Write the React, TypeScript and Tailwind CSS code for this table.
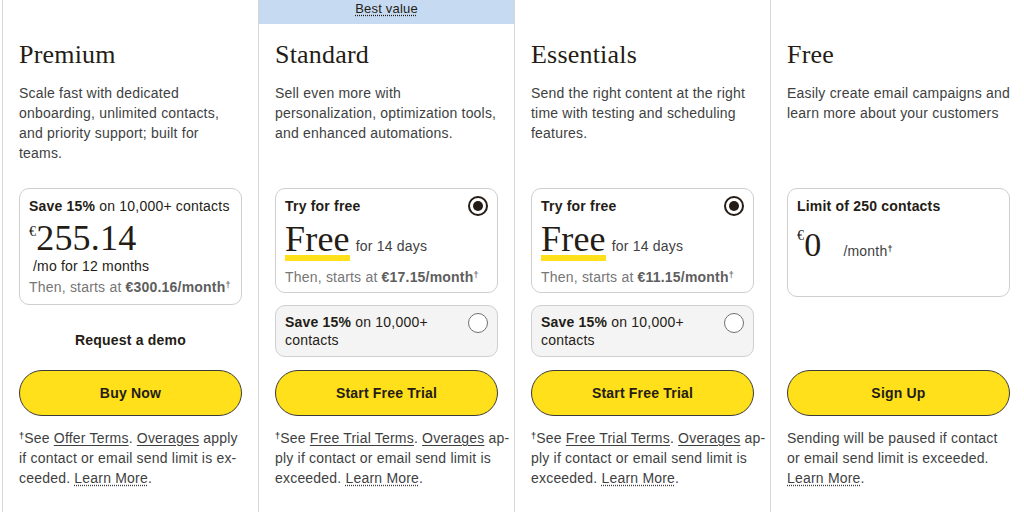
const sans = { fontFamily: '"Liberation Sans", Arial, sans-serif' };

function Radio({ checked }: { checked?: boolean }) {
  if (checked) {
    return (
      <span className="w-5 h-5 shrink-0 rounded-full border-2 border-[#241c15] bg-white flex items-center justify-center">
        <span className="w-[10px] h-[10px] rounded-full bg-[#241c15]" />
      </span>
    );
  }
  return <span className="w-5 h-5 shrink-0 rounded-full border border-[#707070] bg-white" />;
}

function Dagger() {
  return <span className="text-[9px] leading-none align-[4px] font-semibold">†</span>;
}

function Title({ children }: { children: React.ReactNode }) {
  return (
    <h2 className="font-['Liberation_Serif',serif] text-[26px] leading-[32px] text-[#241c15]">
      {children}
    </h2>
  );
}

function Desc({ children }: { children: React.ReactNode }) {
  return (
    <p className="mt-3 min-h-[105px] whitespace-nowrap text-[14px] leading-5 text-[#403f3f]">{children}</p>
  );
}

function YellowButton({ label }: { label: string }) {
  return (
    <button className="w-full h-[46px] rounded-full border border-[#3a3a3a] bg-[#ffe01b] text-[14px] font-semibold text-[#241c15]">
      {label}
    </button>
  );
}

function Then({ price }: { price: string }) {
  return (
    <p className="text-[14px] leading-5 text-[#767676]">
      Then, starts at <span className="font-semibold text-[#5e5e5e]">{price}/month</span>
      <Dagger />
    </p>
  );
}

function TrialBox({ price }: { price: string }) {
  return (
    <div>
      <div className="h-[105px] rounded-[10px] border border-[#cfcfcf] bg-white px-[9px] pt-[7px]">
        <div className="flex justify-between items-start">
          <p className="text-[14px] leading-5 font-semibold text-[#241c15]">Try for free</p>
          <Radio checked />
        </div>
        <div className="mt-[5px] flex items-baseline">
          <div className="flex flex-col">
            <span className="font-['Liberation_Serif',serif] text-[36px] leading-[36px] text-[#241c15]">Free</span>
            <span className="mt-[-2px] h-[6px] bg-[#ffe01b]" />
          </div>
          <span className="ml-[6px] text-[14px] leading-5 text-[#403f3f]">for 14 days</span>
        </div>
        <div className="mt-[6px]">
          <Then price={price} />
        </div>
      </div>
      <div className="mt-3 h-[52px] rounded-[10px] border border-[#cfcfcf] bg-[#f4f4f4] px-[9px] pt-[7px] flex justify-between items-start">
        <p className="text-[14px] leading-[18px] text-[#241c15]">
          <span className="font-semibold">Save 15%</span> on 10,000+
          <br />
          contacts
        </p>
        <Radio />
      </div>
    </div>
  );
}

function Footer({ children }: { children: React.ReactNode }) {
  return <p className="mt-3 whitespace-nowrap text-[14px] leading-5 text-[#403f3f]">{children}</p>;
}

function TrialFooter() {
  return (
    <Footer>
      <Dagger />
      See <span className="underline underline-offset-2">Free Trial Terms</span>.{' '}
      <span className="underline underline-offset-2">Overages</span> ap-
      <br />
      ply if contact or email send limit is
      <br />
      exceeded. <span className="underline decoration-dotted underline-offset-2">Learn More</span>.
    </Footer>
  );
}

export default function App() {
  return (
    <div className="w-[1024px] h-[512px] overflow-hidden bg-white pl-[2px] flex tracking-[0.2px]" style={sans}>
      {/* Premium */}
      <div className="w-[256px] shrink-0 border-l border-[#d6d6d6] px-4">
        <div className="h-6" />
        <div className="pt-[15px]">
          <Title>Premium</Title>
          <Desc>
            Scale fast with dedicated
            <br />
            onboarding, unlimited contacts,
            <br />
            and priority support; built for
            <br />
            teams.
          </Desc>
          <div className="h-[182px]">
            <div className="h-[117px] rounded-[10px] border border-[#cfcfcf] bg-white px-[9px] pt-[7px]">
              <p className="text-[14px] leading-5 text-[#241c15]">
                <span className="font-semibold">Save 15%</span> on 10,000+ contacts
              </p>
              <div className="mt-[4px] flex items-start font-['Liberation_Serif',serif] text-[#241c15]">
                <span className="text-[14px] leading-none mt-[5px]">€</span>
                <span className="text-[36px] leading-[36px]">255.14</span>
              </div>
              <p className="pl-1 text-[14px] leading-5 text-[#241c15]">/mo for 12 months</p>
              <div className="mt-[1px]">
                <Then price="€300.16" />
              </div>
            </div>
            <p className="mt-[25px] text-center text-[14px] leading-5 font-semibold text-[#241c15]">Request a demo</p>
          </div>
          <YellowButton label="Buy Now" />
          <Footer>
            <Dagger />
            See <span className="underline underline-offset-2">Offer Terms</span>.{' '}
            <span className="underline underline-offset-2">Overages</span> apply
            <br />
            if contact or email send limit is ex-
            <br />
            ceeded. <span className="underline decoration-dotted underline-offset-2">Learn More</span>.
          </Footer>
        </div>
      </div>

      {/* Standard */}
      <div className="w-[256px] shrink-0 border-l border-[#d6d6d6]">
        <div className="h-6 bg-[#c6daf1] flex justify-center">
          <span className="text-[13px] leading-[17px] text-[#241c15] underline decoration-dotted underline-offset-2">
            Best value
          </span>
        </div>
        <div className="px-4 pt-[15px]">
          <Title>Standard</Title>
          <Desc>
            Sell even more with
            <br />
            personalization, optimization tools,
            <br />
            and enhanced automations.
          </Desc>
          <div className="h-[182px]">
            <TrialBox price="€17.15" />
          </div>
          <YellowButton label="Start Free Trial" />
          <TrialFooter />
        </div>
      </div>

      {/* Essentials */}
      <div className="w-[256px] shrink-0 border-l border-[#d6d6d6] px-4">
        <div className="h-6" />
        <div className="pt-[15px]">
          <Title>Essentials</Title>
          <Desc>
            Send the right content at the right
            <br />
            time with testing and scheduling
            <br />
            features.
          </Desc>
          <div className="h-[182px]">
            <TrialBox price="€11.15" />
          </div>
          <YellowButton label="Start Free Trial" />
          <TrialFooter />
        </div>
      </div>

      {/* Free */}
      <div className="w-[256px] shrink-0 border-l border-[#d6d6d6] px-4">
        <div className="h-6" />
        <div className="pt-[15px]">
          <Title>Free</Title>
          <Desc>
            Easily create email campaigns and
            <br />
            learn more about your customers
          </Desc>
          <div className="h-[182px]">
            <div className="h-[109px] rounded-[10px] border border-[#cfcfcf] bg-white px-[9px] pt-[7px]">
              <p className="text-[14px] leading-5 font-semibold text-[#241c15]">Limit of 250 contacts</p>
              <div className="mt-[12px] flex items-start text-[#241c15]">
                <span className="font-['Liberation_Serif',serif] text-[14px] leading-none mt-[1px]">€</span>
                <span className="font-['Liberation_Serif',serif] text-[34px] leading-[33px]">0</span>
                <span className="ml-[22px] self-end text-[14px] leading-5 text-[#403f3f]">
                  /month
                  <Dagger />
                </span>
              </div>
            </div>
          </div>
          <YellowButton label="Sign Up" />
          <Footer>
            Sending will be paused if contact
            <br />
            or email send limit is exceeded.
            <br />
            <span className="underline decoration-dotted underline-offset-2">Learn More</span>.
          </Footer>
        </div>
      </div>
    </div>
  );
}
